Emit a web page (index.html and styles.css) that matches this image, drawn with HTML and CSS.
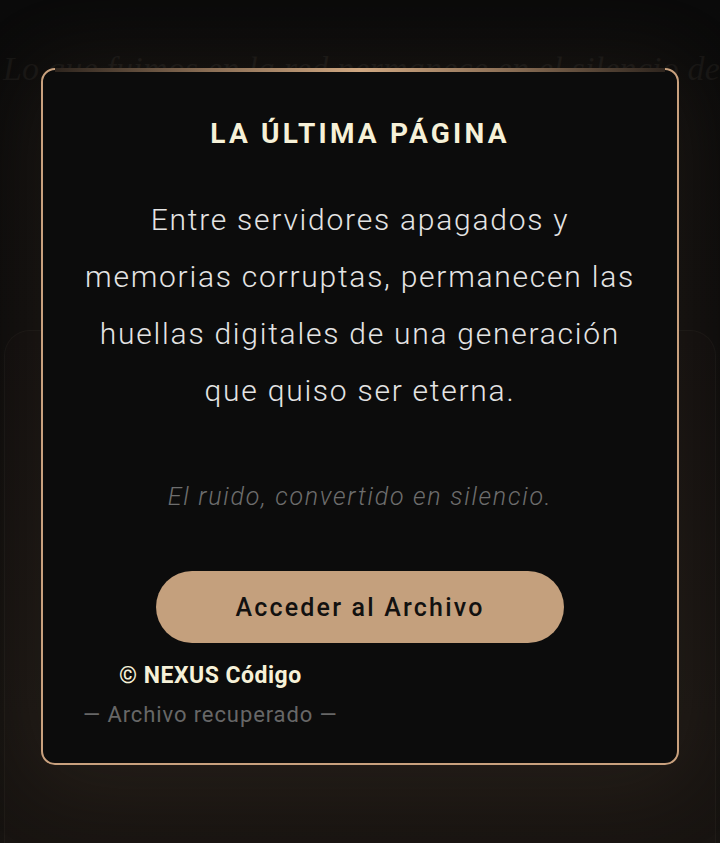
FILE: index.html
```html
<!DOCTYPE html>
<html lang="es">
<head>
<meta charset="utf-8">
<title>La última página</title>
<link rel="stylesheet" href="styles.css">
</head>
<body>
<div class="bg-quote">Lo que fuimos en la red permanece en el silencio de</div>
<div class="bg-panel"></div>
<main class="stage">
  <section class="card">
    <h1 class="title">LA ÚLTIMA PÁGINA</h1>
    <p class="body">Entre servidores apagados y<br>memorias corruptas, permanecen las<br>huellas digitales de una generación<br>que quiso ser eterna.</p>
    <p class="whisper">El ruido, convertido en silencio.</p>
    <div class="actions">
      <a class="btn" href="#">Acceder al Archivo</a>
    </div>
    <footer class="foot">
      <div class="brand">© NEXUS Código</div>
      <div class="note">— Archivo recuperado —</div>
    </footer>
  </section>
</main>
</body>
</html>
```
FILE: styles.css
```css
* { box-sizing: border-box; }
html, body {
  margin: 0;
  height: 843px;
  overflow: hidden;
}
body {
  position: relative;
  font-family: Roboto, "Noto Sans", sans-serif;
  background: linear-gradient(180deg, #0a0a0a 0%, #0c0b0b 40%, #13110f 85%, #161310 100%);
}
.bg-quote {
  position: absolute;
  top: 50px;
  left: 3px;
  white-space: nowrap;
  font-family: "Liberation Serif", "DejaVu Serif", serif;
  font-style: italic;
  font-size: 34px;
  letter-spacing: 0.2px;
  color: #161514;
}
.bg-panel {
  position: absolute;
  left: 4px;
  right: 4px;
  top: 330px;
  bottom: -40px;
  border: 1px solid rgba(255, 240, 220, 0.03);
  border-radius: 26px;
  background: rgba(196, 159, 122, 0.015);
}
.stage {
  position: relative;
  padding: 68px 41px 0;
}
.card {
  position: relative;
  border: 2px solid #c9a17e;
  border-radius: 14px;
  background: #0c0c0c;
  padding: 47px 30px 34px 40px;
  box-shadow: 0 10px 90px 14px rgba(196, 150, 110, 0.09);
}
.card::before {
  content: "";
  position: absolute;
  top: -2px;
  left: 12px;
  right: 12px;
  height: 4px;
  background: linear-gradient(90deg, #2e251e 0%, #8a6e55 25%, #d0a882 50%, #8a6e55 75%, #2e251e 100%);
}
.title {
  margin: 0 10px 0 0;
  text-align: center;
  font-size: 28px;
  line-height: 34px;
  font-weight: 700;
  letter-spacing: 3.2px;
  color: #f6f1d8;
}
.body {
  margin: 40px 0 0 -10px;
  text-align: center;
  font-size: 30px;
  line-height: 57px;
  font-weight: 300;
  letter-spacing: 1.75px;
  color: #e4e4e4;
}
.whisper {
  margin: 63px 10px 0 0;
  text-align: center;
  font-size: 25px;
  line-height: 30px;
  font-style: italic;
  font-weight: 300;
  letter-spacing: 1.75px;
  color: #6e6e6e;
}
.actions {
  display: flex;
  justify-content: center;
  margin: 59px 10px 0 0;
}
.btn {
  display: flex;
  align-items: center;
  justify-content: center;
  width: 408px;
  height: 72px;
  border-radius: 36px;
  background: #c4a07d;
  color: #121110;
  text-decoration: none;
  font-size: 25px;
  font-weight: 500;
  letter-spacing: 2.2px;
}
.foot {
  display: flex;
  flex-direction: column;
  align-items: center;
  width: max-content;
  margin-top: 19px;
}
.brand {
  font-size: 23px;
  line-height: 28px;
  font-weight: 700;
  letter-spacing: 0.5px;
  color: #f6f1d8;
}
.note {
  margin-top: 11px;
  font-size: 22px;
  line-height: 28px;
  letter-spacing: 0.9px;
  color: #676767;
}
```
